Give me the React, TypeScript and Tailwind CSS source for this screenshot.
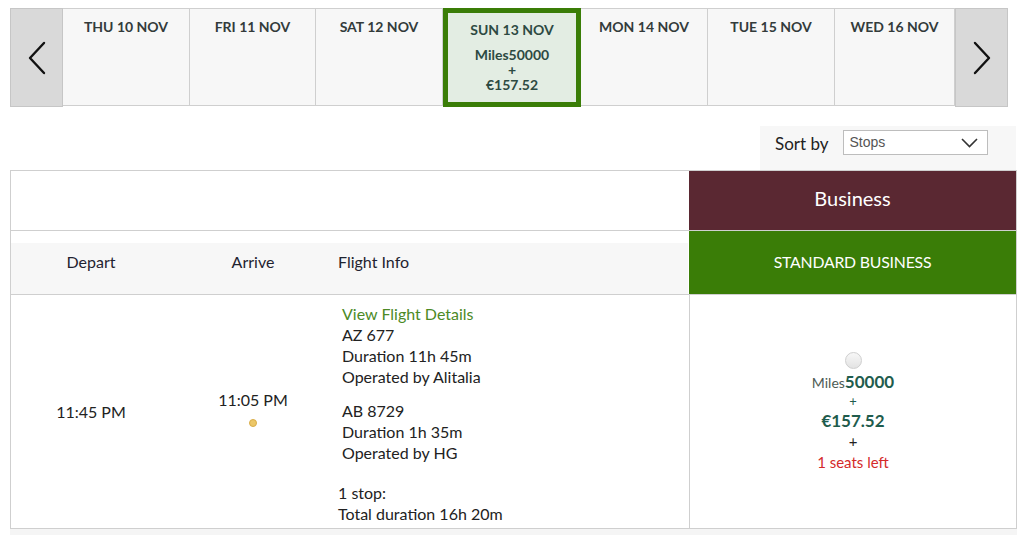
import React from "react";

const days = [
  { label: "THU 10 NOV", w: "w-[127px]" },
  { label: "FRI 11 NOV", w: "w-[126px]" },
  { label: "SAT 12 NOV", w: "w-[127px]" },
  { label: "SUN 13 NOV", w: "w-[138px]", selected: true },
  { label: "MON 14 NOV", w: "w-[127px]" },
  { label: "TUE 15 NOV", w: "w-[127px]" },
  { label: "WED 16 NOV", w: "w-[120px]" },
];

function Chevron({ dir }: { dir: "left" | "right" }) {
  return (
    <svg width="22" height="34" viewBox="0 0 22 34" fill="none">
      {dir === "left" ? (
        <path d="M18 2 L4 17 L18 32" stroke="#111" strokeWidth="2.4" strokeLinecap="round" strokeLinejoin="round" />
      ) : (
        <path d="M4 2 L18 17 L4 32" stroke="#111" strokeWidth="2.4" strokeLinecap="round" strokeLinejoin="round" />
      )}
    </svg>
  );
}

export default function App() {
  return (
    <div className="w-[1024px] h-[535px] overflow-hidden bg-white font-['Lato','Noto_Sans',sans-serif] text-[#333]">
      {/* Date strip */}
      <div className="flex ml-[10px] mt-[8px] h-[99px]">
        <div className="w-[53px] h-[99px] bg-[#d9d9d9] border border-[#c6c6c6] flex items-center justify-center">
          <Chevron dir="left" />
        </div>
        {days.map((d) =>
          d.selected ? (
            <div
              key={d.label}
              className={`${d.w} h-[99px] bg-[#e3ede3] border-[5px] border-[#3a7d07] flex flex-col items-center pt-[9px] text-[#2d4a42] text-[14px] font-bold leading-[15px]`}
            >
              <div className="leading-[16px]">{d.label}</div>
              <div className="mt-[9px]">Miles50000</div>
              <div>+</div>
              <div>€157.52</div>
            </div>
          ) : (
            <div
              key={d.label}
              className={`${d.w} h-[98px] bg-[#f7f7f7] border-t border-b border-r border-[#cfcfcf] flex justify-center pt-[10px] text-[14px] font-bold leading-[16px] text-[#333b3b]`}
            >
              {d.label}
            </div>
          )
        )}
        <div className="w-[53px] h-[99px] bg-[#d9d9d9] border border-[#c6c6c6] flex items-center justify-center">
          <Chevron dir="right" />
        </div>
      </div>

      {/* Sort by */}
      <div className="flex justify-end mt-[19px] pr-[8px]">
        <div className="w-[256px] h-[44px] bg-[#f7f7f7] flex items-start pt-[4px] pl-[15px]">
          <span className="text-[17px] text-[#222] mt-[4px] leading-[20px]">Sort by</span>
          <div className="ml-[14px] w-[145px] h-[25px] bg-white border border-[#bdbdbd] flex items-center justify-between pl-[6px] pr-[9px]">
            <span className="font-['Liberation_Sans',Arial,sans-serif] text-[14px] text-[#555] leading-[16px] -mt-[1px]">Stops</span>
            <svg width="17" height="10" viewBox="0 0 17 10" fill="none">
              <path d="M1 1 L8.5 8.5 L16 1" stroke="#333" strokeWidth="1.6" />
            </svg>
          </div>
        </div>
      </div>

      {/* Table */}
      <div className="ml-[10px] w-[1007px] border border-[#cfcfcf]">
        <div className="flex h-[60px] border-b border-[#cfcfcf]">
          <div className="flex-1 bg-white" />
          <div className="w-[327px] bg-[#5a2832] flex items-center justify-center text-white text-[20px] pb-[5px]">
            Business
          </div>
        </div>
        <div className="flex h-[64px] border-b border-[#cfcfcf]">
          <div className="flex-1 flex flex-col">
            <div className="h-[12px] bg-white" />
            <div className="flex-1 flex items-center bg-[#f7f7f7] text-[16px] text-[#1f2330] pb-[1px]">
              <div className="w-[160px] text-center -mt-[12px]">Depart</div>
              <div className="w-[164px] text-center -mt-[12px]">Arrive</div>
              <div className="pl-[3px] -mt-[12px]">Flight Info</div>
            </div>
          </div>
          <div className="w-[327px] ml-[1px] bg-[#3a7d07] flex items-center justify-center text-white text-[15.8px] tracking-[-0.2px] pb-[2px]">
            STANDARD BUSINESS
          </div>
        </div>
        <div className="flex h-[233px]">
          <div className="w-[160px] flex items-center justify-center text-[16px] text-[#222]">11:45 PM</div>
          <div className="w-[164px] flex flex-col items-center justify-center text-[16px] text-[#222] pb-[8px]">
            <div className="leading-[21px]">11:05 PM</div>
            <div className="mt-[9px] w-[8px] h-[8px] rounded-full bg-[#ecc768] border border-[#d9ad48]" />
          </div>
          <div className="w-[355px] border-r border-[#cfcfcf] pt-[8px] text-[16px] leading-[21px] text-[#222]">
            <div className="pl-[7px]">
              <div className="text-[#4c8a26]">View Flight Details</div>
              <div>AZ 677</div>
              <div>Duration 11h 45m</div>
              <div>Operated by Alitalia</div>
            </div>
            <div className="pl-[7px] mt-[13px]">
              <div>AB 8729</div>
              <div>Duration 1h 35m</div>
              <div>Operated by HG</div>
            </div>
            <div className="pl-[3px] mt-[19px]">
              <div>1 stop:</div>
              <div>Total duration 16h 20m</div>
            </div>
          </div>
          <div className="flex-1 flex flex-col items-center justify-center pt-[2px]">
            <div className="w-[17px] h-[17px] rounded-full border border-[#cfcfcf] bg-[linear-gradient(#f7f7f7,#e3e3e3)]" />
            <div className="mt-[2px] leading-[21px]">
              <span className="text-[14px] text-[#4d5b55]">Miles</span>
              <span className="text-[17px] font-bold text-[#1f5c4d]">50000</span>
            </div>
            <div className="text-[13px] leading-[17px] text-[#1f5c4d]">+</div>
            <div className="text-[17px] font-bold leading-[21px] text-[#1f5c4d]">€157.52</div>
            <div className="text-[15px] leading-[21px] text-[#222]">+</div>
            <div className="text-[15px] leading-[21px] text-[#d42a2a]">1 seats left</div>
          </div>
        </div>
      </div>
      <div className="ml-[10px] w-[1007px] h-[10px] bg-[#f5f5f5]" />
    </div>
  );
}
